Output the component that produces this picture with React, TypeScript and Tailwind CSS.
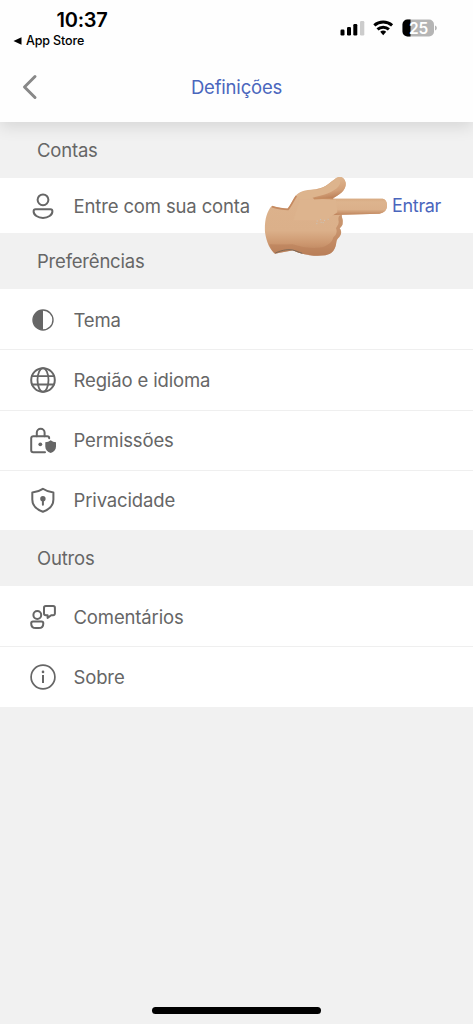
import type { ReactNode } from "react";

function Icon({ children }: { children: ReactNode }) {
  return (
    <svg
      width="28"
      height="28"
      viewBox="0 0 28 28"
      fill="none"
      stroke="#666"
      strokeWidth="2"
      strokeLinecap="round"
      strokeLinejoin="round"
      className="shrink-0"
    >
      {children}
    </svg>
  );
}

const UserIcon = () => (
  <Icon>
    <circle cx="14" cy="7.8" r="5.4" />
    <path d="M6.6 17.3h14.8c1.3 0 2 .8 2 1.9 0 4-4.3 6.7-9.4 6.7s-9.4-2.7-9.4-6.7c0-1.1.7-1.9 2-1.9Z" />
  </Icon>
);

const ThemeIcon = () => (
  <Icon>
    <circle cx="14" cy="14" r="10" strokeWidth="1.4" />
    <path d="M14 4a10 10 0 0 0 0 20Z" fill="#666" stroke="none" />
  </Icon>
);

const GlobeIcon = () => (
  <Icon>
    <circle cx="14" cy="14" r="11.8" />
    <ellipse cx="14" cy="14" rx="5.5" ry="11.8" strokeWidth="1.8" />
    <path d="M3 10.2h22M3 18.5h22" strokeWidth="1.8" />
  </Icon>
);

const LockIcon = () => (
  <Icon>
    <path d="M16 26.2H4.2a2 2 0 0 1-2-2V12.200a2 2 0 0 1 2-2h14a2 2 0 0 1 2 2" />
    <path d="M7.800 10.200V6.600a3.900 3.900 0 0 1 7.800 0v3.600" />
    <circle cx="11.3" cy="18.3" r="1.9" fill="#666" stroke="none" />
    <path
      d="M21.7 14.2c1.600 1.200 3.300 1.800 5.300 2v4.200c0 3.100-2 5.300-5.300 6.600-3.300-1.300-5.400-3.500-5.400-6.600v-4.200c2-.2 3.800-.8 5.400-2Z"
      fill="#666"
      stroke="none"
    />
  </Icon>
);

const ShieldIcon = () => (
  <Icon>
    <path d="M13.9 2.800c3 2.100 6.500 3.300 10.500 3.600v7.100c0 6-4 9.900-10.500 12.300C7.400 23.400 3.300 19.500 3.300 13.500V6.400c4-.3 7.500-1.500 10.600-3.600Z" />
    <circle cx="13.9" cy="12.8" r="2.7" fill="#666" stroke="none" />
    <path d="M13.9 13v5.700" />
  </Icon>
);

const FeedbackIcon = () => (
  <Icon>
    <circle cx="8.3" cy="12" r="3.9" />
    <path d="M4 18.600h8.500a1.800 1.800 0 0 1 1.800 1.800c0 2.800-1.800 4.700-4.600 4.700H6.800c-2.800 0-4.600-1.900-4.600-4.700A1.800 1.800 0 0 1 4 18.600Z" />
    <path d="M16.8 3h7.300a1.800 1.800 0 0 1 1.800 1.800v5.700a1.800 1.800 0 0 1-1.800 1.800h-1.900l-3.600 2.600v-2.600h-1.800a1.800 1.800 0 0 1-1.800-1.800V4.800A1.800 1.800 0 0 1 16.800 3Z" />
  </Icon>
);

const InfoIcon = () => (
  <Icon>
    <circle cx="14" cy="14" r="11.9" strokeWidth="1.7" />
    <path d="M14 12v8" strokeLinecap="butt" />
    <circle cx="14" cy="8.9" r="1.3" fill="#666" stroke="none" />
  </Icon>
);

function PointingHand() {
  return (
    <svg
      viewBox="0 0 669 315"
      className="pointer-events-none absolute left-[250px] -top-[13px] h-[105px] w-[223px]"
    >
      <defs>
        <linearGradient id="palm" x1="0" y1="0" x2="0" y2="1">
          <stop offset="0" stopColor="#ddb48e" />
          <stop offset=".68" stopColor="#dbb08a" />
          <stop offset=".84" stopColor="#cd9870" />
          <stop offset="1" stopColor="#b57b55" />
        </linearGradient>
        <linearGradient id="finger" x1="0" y1="0" x2="0" y2="1">
          <stop offset="0" stopColor="#d8aa82" />
          <stop offset=".2" stopColor="#ddb48e" />
          <stop offset=".65" stopColor="#dbb08a" />
          <stop offset="1" stopColor="#bd8159" />
        </linearGradient>
        <linearGradient id="thumb" x1=".35" y1=".2" x2=".6" y2="1">
          <stop offset="0" stopColor="#ddb38c" />
          <stop offset=".6" stopColor="#d3a078" />
          <stop offset="1" stopColor="#b97c54" />
        </linearGradient>
      </defs>
      <path
        d="M65 123C80 127 98 131 112 131C122 121 129 102 139 90C152 76 175 75 201 72C229 67 241 51 255 42C268 31 284 36 287 53C290 74 269 91 244 101L398 101C408 103 412 113 411 124C410 136 402 144 388 146L276 149C273 155 280 162 278 172C279 181 274 185 269 190C276 199 274 208 268 216C262 222 260 224 259 232C257 253 247 267 226 271C191 275 157 270 128 256C109 260 94 262 75 266C61 257 49 231 45 202C43 169 49 141 65 123Z"
        fill="url(#palm)"
      />
      <path
        d="M201 72C229 67 241 51 255 42C268 31 284 36 287 53C290 74 269 91 244 101L192 103L180 88Z"
        fill="url(#thumb)"
      />
      <path
        d="M139 92C151 78 174 77 202 74C229 68 245 50 259 43C270 39 275 52 266 64C251 83 218 91 187 98C168 104 150 107 139 92Z"
        fill="#ddb48d"
      />
      <path
        d="M240 101H398C408 103 412 113 411 124C410 136 402 144 388 146L276 149L240 151Z"
        fill="url(#finger)"
      />
      <path d="M150 104H258L262 142L228 166H130Z" fill="#ddb48e" />
      <path d="M192 101C211 99 229 100 250 101" fill="none" stroke="#c78d61" strokeWidth="4" />
      <path
        d="M388 145L276 149C265 150 264 159 266 169C267 179 260 184 258 190C263 201 258 211 250 217C246 234 234 240 218 247C190 252 157 248 128 238C105 239 80 239 58 238C64 253 70 261 75 266L128 256C157 270 191 275 226 271C247 267 257 253 259 232C260 224 262 222 268 216C274 208 276 199 269 190C274 185 279 181 278 172C280 162 273 155 276 149Z"
        fill="#bb805a"
        opacity=".6"
      />
      <path d="M66 125C80 129 98 133 114 133C123 123 130 106 139 93" fill="none" stroke="#c58a61" strokeWidth="5" />
      <path d="M76 264C99 254 117 252 132 256L157 265" fill="none" stroke="#7d6857" strokeWidth="3" />
      <path
        d="M199 176h3m-2-8h3m7-4h3m-1 8h3m7-6h3m8-3h3m-18 10h3"
        stroke="#c9c5be"
        strokeWidth="3"
      />
    </svg>
  );
}

function StatusBar() {
  return (
    <div className="flex h-[52px] justify-between text-black">
      <div className="pl-[13px] pt-[9px]">
        <div className="pl-[43.5px] text-[20px] font-semibold leading-[22px] tracking-[-0.25px]">10:37</div>
        <div className="mt-[2px] flex items-center gap-[4px] text-[12.5px] font-medium leading-4">
          <svg width="9" height="8" viewBox="0 0 9 8">
            <path d="M8.5 .3v7.400L.5 4Z" />
          </svg>
          App Store
        </div>
      </div>
      <svg width="98" height="20" viewBox="0 0 98 20" className="mr-[36px] mt-[18px]">
        <rect x="1.5" y="11.5" width="4" height="6" rx="1.2" />
        <rect x="8" y="9" width="4" height="8.5" rx="1.2" />
        <rect x="14.3" y="6" width="4" height="11.5" rx="1.2" />
        <rect x="21" y="3" width="4.300" height="14.500" rx="1.2" fill="#ccc" />
        <g fill="none" stroke="#000" strokeWidth="3">
          <path d="M35.300 7.400a13.400 13.400 0 0 1 17.800 0" />
          <path d="M38.500 11.400a8.500 8.500 0 0 1 11.400 0" />
        </g>
        <path d="M41.200 13.800a4.500 4.500 0 0 1 6 0l-3 3.500Z" />
        <rect x="63.500" y="1.500" width="31.500" height="17" rx="5" fill="#b5b5b5" />
        <path d="M71.500 1.500h-3a5 5 0 0 0-5 5v7a5 5 0 0 0 5 5h3Z" />
        <path d="M96 7.500c2.400.8 2.400 4.200 0 5Z" fill="#b5b5b5" />
        <text x="79.500" y="15.600" textAnchor="middle" fill="#fff" fontSize="15.500" fontWeight="600">
          25
        </text>
      </svg>
    </div>
  );
}

function SectionTitle({ children }: { children: ReactNode }) {
  return <h2 className="flex h-14 shrink-0 items-center pl-[37px] tracking-[-0.2px]">{children}</h2>;
}

function Row({ icon, label }: { icon: ReactNode; label: string }) {
  return (
    <li className="flex h-[60.25px] items-center gap-[16.5px] border-t border-[#efefef] bg-white pl-[29px] first:border-t-white">
      {icon}
      <span>{label}</span>
    </li>
  );
}

export default function App() {
  return (
    <div className="flex h-[1024px] w-[473px] flex-col overflow-hidden bg-[#f1f1f1] font-['Inter',sans-serif] text-[18.5px] leading-6 tracking-[-0.14px] text-[#666]">
      <header className="relative h-[122px] shrink-0 bg-[#fefefe] shadow-[0_4px_16px_rgba(0,0,0,0.12)]">
        <StatusBar />
        <div className="relative flex h-[70px] items-center justify-center">
          <svg
            width="16"
            height="26"
            viewBox="0 0 16 26"
            fill="none"
            stroke="#888"
            strokeWidth="3"
            strokeLinecap="round"
            strokeLinejoin="round"
            className="absolute left-[22px] top-[22px]"
          >
            <path d="M13 2.500 2.500 13 13 23.500" />
          </svg>
          <h1 className="tracking-[-0.2px] text-[#4a66bd]">Definições</h1>
        </div>
      </header>

      <SectionTitle>Contas</SectionTitle>
      <div className="relative flex h-[55px] shrink-0 items-center gap-[16.5px] bg-white pl-[29px] pr-8">
        <UserIcon />
        <span>Entre com sua conta</span>
        <button className="ml-auto text-[18px] tracking-[-0.35px] text-[#4a66bd]">Entrar</button>
        <PointingHand />
      </div>

      <SectionTitle>Preferências</SectionTitle>
      <ul>
        <Row icon={<ThemeIcon />} label="Tema" />
        <Row icon={<GlobeIcon />} label="Região e idioma" />
        <Row icon={<LockIcon />} label="Permissões" />
        <Row icon={<ShieldIcon />} label="Privacidade" />
      </ul>

      <SectionTitle>Outros</SectionTitle>
      <ul>
        <Row icon={<FeedbackIcon />} label="Comentários" />
        <Row icon={<InfoIcon />} label="Sobre" />
      </ul>

      <div className="mx-auto mb-[10px] mt-auto h-[7px] w-[169px] rounded-full bg-black" />
    </div>
  );
}
